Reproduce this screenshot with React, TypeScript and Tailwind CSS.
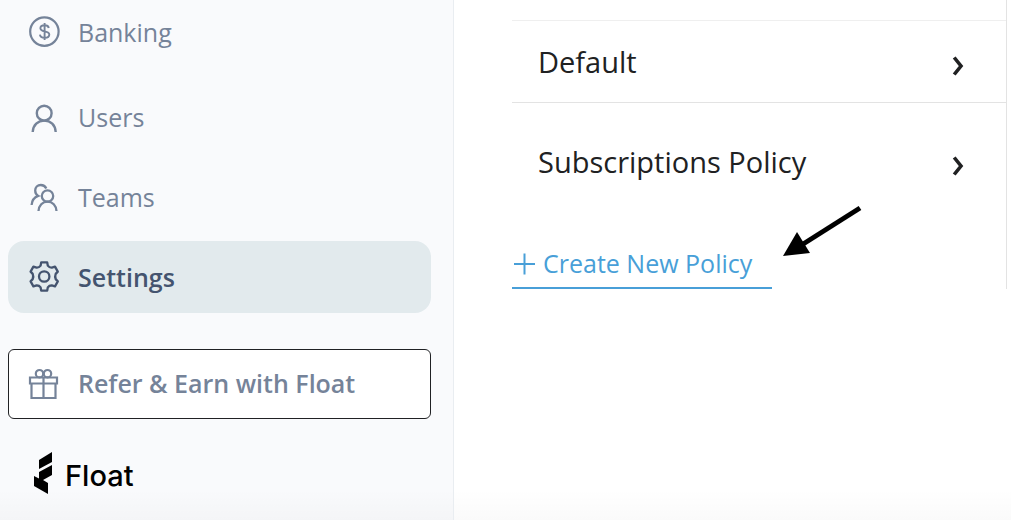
import type { ReactNode } from 'react';
import clsx from 'clsx';

function BankingIcon() {
    return (
        <svg width="32" height="32" viewBox="0 0 32 32" fill="none" stroke="currentColor" strokeWidth="2.2" aria-hidden="true">
            <circle cx="16.4" cy="15.6" r="14.2" />
            <path d="M20.8 12c-.3-1.800-2-2.700-4.200-2.700-2.400 0-4.200 1-4.200 2.900 0 4.400 8.900 1.900 8.900 6.400 0 2.100-2 3.300-4.600 3.300-2.700 0-4.500-1.100-4.800-3.300M16.600 7.100v17" strokeWidth="1.9" />
        </svg>
    );
}

function UserIcon() {
    return (
        <svg width="32" height="32" viewBox="0 0 32 32" fill="none" stroke="currentColor" strokeWidth="2.4" aria-hidden="true">
            <circle cx="16.2" cy="12.2" r="7.4" />
            <path d="M4.700 31c.4-7 5.200-11.400 11.600-11.400S27.300 24 27.700 31" />
        </svg>
    );
}

function TeamsIcon() {
    return (
        <svg width="32" height="32" viewBox="0 0 32 32" fill="none" stroke="currentColor" strokeWidth="2.3" aria-hidden="true">
            <circle cx="19.5" cy="15" r="5.700" />
            <path d="M10.500 30c.4-5.400 3.900-9.300 9-9.300s8.600 3.900 9 9.300" />
            <path d="M18.300 7.500C17.200 5.200 15.200 4 12.800 4 9.500 4 7.200 6.500 7.200 9.600c0 2.300 1 4.200 3 5.300-4 1.500-6.300 4.800-6.600 9.100" />
        </svg>
    );
}

function SettingsIcon() {
    return (
        <svg width="32" height="32" viewBox="0 0 32 32" fill="none" stroke="currentColor" strokeWidth="2.3" strokeLinejoin="round" aria-hidden="true">
            <circle cx="16.200" cy="15.500" r="5.200" />
            <path d="M13.200 1.400h6l.6 3.200c1 1.400 2.400 2.100 4 2l3.200-1 2.800 5-2.100 2.300c-.7 1.700-.7 3.500 0 5.200l2.100 2.300-2.800 5-3.200-1c-1.600-.1-3 .6-4 2l-.6 3.200h-6l-.6-3.200c-1-1.400-2.400-2.100-4-2l-3.200 1-2.800-5 2.100-2.300c.7-1.700.7-3.500 0-5.200l-2.100-2.300 2.800-5 3.200 1c1.600.1 3-.6 4-2z" />
        </svg>
    );
}

function GiftIcon() {
    return (
        <svg width="32" height="32" viewBox="0 0 32 32" fill="none" stroke="currentColor" strokeWidth="2.2" aria-hidden="true">
            <path d="M2 9.500h27v6H2zM3.500 15.500h24V30h-24zM15.500 9.500V30" />
            <circle cx="11.500" cy="5.700" r="3.700" />
            <circle cx="19.500" cy="5.700" r="3.700" />
        </svg>
    );
}

function FloatMark() {
    return (
        <svg width="20" height="44" viewBox="0 0 20 44" fill="currentColor" aria-hidden="true">
            <path d="M5 10 18 2v10L5 19z" />
            <path d="M5 22 18 15v10L9 30l5 3v11L0 36V26l5 2.500z" />
        </svg>
    );
}

type NavItemProps = {
    icon: ReactNode;
    label: string;
    active?: boolean;
};

function NavItem({ icon, label, active }: NavItemProps) {
    return (
        <a
            href="#"
            aria-current={active ? 'page' : undefined}
            className={clsx(
                'flex h-[72px] items-center gap-[18px] rounded-2xl px-5 text-[25px]',
                active ? 'bg-[#e2eaed] font-semibold text-[#44546f]' : 'text-[#758399]',
            )}
        >
            {icon}
            <span className="pt-0.5">{label}</span>
        </a>
    );
}

function PolicyRow({ name, className }: { name: string; className: string }) {
    return (
        <button type="button" className={clsx('flex w-full items-center justify-between pr-[41px] pl-[26px] text-left text-[29px] text-[#202122]', className)}>
            <span>{name}</span>
            <svg width="14" height="20" viewBox="0 0 14 20" className="mt-2" fill="none" stroke="currentColor" strokeWidth="3.6" aria-hidden="true">
                <path d="M3.200 1.500 10 10l-6.800 8.500" />
            </svg>
        </button>
    );
}

export default function App() {
    return (
        <div className="flex min-h-screen bg-white font-['Open_Sans',sans-serif]">
            <aside className="w-[454px] shrink-0 border-r border-[#e9edf1] bg-[#f9fafc] bg-linear-to-b from-transparent from-94% to-black/2 pr-[22px] pl-2">
                <nav className="flex flex-col gap-2">
                    <div className="-mt-1 mb-[5px]">
                        <NavItem icon={<BankingIcon />} label="Banking" />
                    </div>
                    <NavItem icon={<UserIcon />} label="Users" />
                    <NavItem icon={<TeamsIcon />} label="Teams" />
                    <NavItem icon={<SettingsIcon />} label="Settings" active />
                </nav>
                <a
                    href="#"
                    className="mt-9 flex h-[70px] items-center gap-[18px] rounded-md border border-[#202124] bg-white px-[19px] text-[25px] font-semibold text-[#758399]"
                >
                    <GiftIcon />
                    <span>Refer &amp; Earn with Float</span>
                </a>
                <div className="mt-[31px] flex items-center gap-[11px] pl-[26px] text-black">
                    <FloatMark />
                    <span className="pt-2 font-['Inter',sans-serif] text-[29px] leading-8 font-medium">Float</span>
                </div>
            </aside>

            <main className="flex-1 bg-linear-to-b from-transparent from-94% to-black/2 pr-1 pl-[58px]">
                <section className="relative border-r border-[#e3e3e3] pt-5">
                    <PolicyRow name="Default" className="h-[83px] border-y border-t-[#efefef] border-b-[#e3e3e3]" />
                    <PolicyRow name="Subscriptions Policy" className="h-[118px]" />
                    <div className="pt-5">
                        <button type="button" className="flex h-12 w-[260px] items-center gap-[7px] border-b-2 border-[#489fd8] text-[25px] text-[#489fd8]">
                            <svg width="24" height="24" viewBox="0 0 24 24" fill="none" stroke="currentColor" strokeWidth="2" aria-hidden="true">
                                <path d="M2 12h21M12.500 1.500v21" />
                            </svg>
                            <span>Create New Policy</span>
                        </button>
                    </div>
                    {/* Callout arrow pointing at the create button */}
                    <svg width="80" height="54" viewBox="0 0 80 54" className="absolute top-[204px] left-[270px] text-black" aria-hidden="true">
                        <path d="M78 4 18 42" stroke="currentColor" strokeWidth="5" />
                        <path d="M1 52 15 28l13 21z" fill="currentColor" />
                    </svg>
                </section>
            </main>
        </div>
    );
}
